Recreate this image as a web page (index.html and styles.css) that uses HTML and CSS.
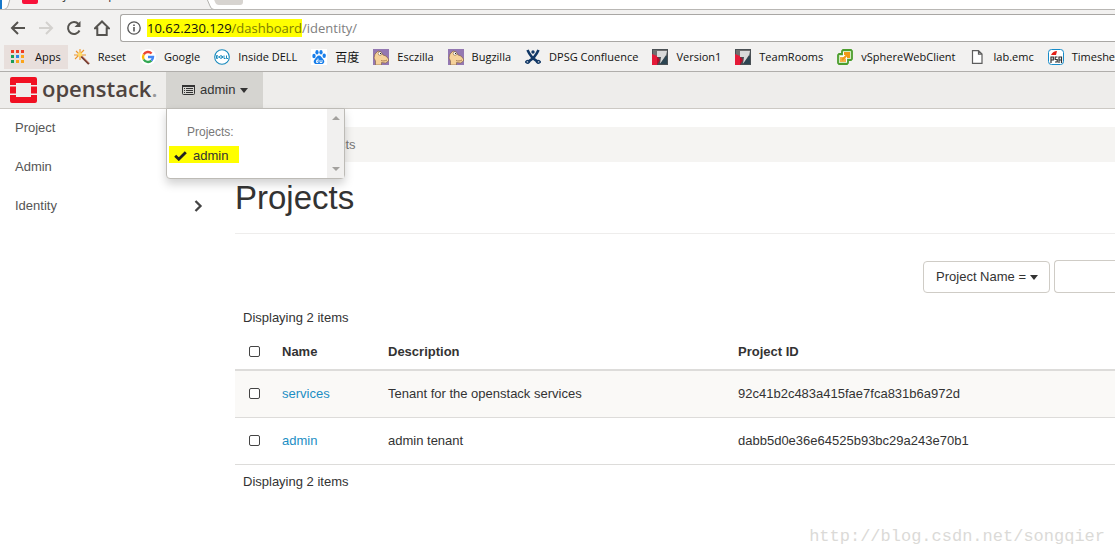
FILE: index.html
```html
<!DOCTYPE html>
<html lang="en">
<head>
<meta charset="utf-8">
<title>Projects - OpenStack Dashboard</title>
<link rel="stylesheet" href="styles.css">
</head>
<body>
<svg class="defs" aria-hidden="true">
  <symbol id="buggie" viewBox="0 0 16 16"><path fill="#9478b2" d="M0 0h16v16H0z"/><path fill="#f6d29a" stroke="#7d5a40" stroke-width=".6" d="M2.500 16v-4L1 9l1-4 3-3 3 1 2 3 3 1 2.500 3v2l-3 2-4-.5V16z"/><circle cx="7" cy="4.500" r="1.800" fill="#fff" stroke="#6d4c35" stroke-width=".5"/><path fill="#222" d="M7 4h1v1H7z"/><path stroke="#9b6c45" fill="none" stroke-width=".8" d="M8 11.500c2 .8 4 .5 6-.5"/></symbol>
  <symbol id="vone" viewBox="0 0 16 16"><path fill="#4a5054" d="M0 0h16v16H0z"/><path fill="#6f6f6f" d="M1 1h14v6H1z"/><path fill="#e51a38" d="M0 5l5 2v9H0z"/><path fill="#b50f2b" d="M5 7l3 4-3 5z"/><path fill="#d9d9d9" d="M5 2h10l-1 4-6 9 1-7H5z"/><path fill="#2c4552" d="M15 6v9H8z"/></symbol>
</svg>

<div class="tabstrip">
  <svg class="tab-shape" width="260" height="10" viewBox="0 0 260 10" aria-hidden="true"><path fill="#fff" d="M0 0h260v10H0z"/><path fill="#1979ca" d="M0 0h2v9H0z"/><path fill="#f2f1f0" stroke="#b3b1ae" d="M4 9.500Q7 9 8 6L10-1H207l3 7q1 3.500 4 3.500"/><path fill="#d7d4d0" d="M213-3h30v5q0 3-3 3h-21q-3 0-4-3z"/><rect x="22" y="-12" width="16" height="16" rx="2" fill="#f8123a"/></svg>
  <span class="tab-title">Projects - OpenStack</span>
</div>

<div class="toolbar">
  <button class="tool" aria-label="Back"><svg width="16" height="16" viewBox="0 0 16 16"><path d="M15 8H2M8 2L2 8l6 6"/></svg></button>
  <button class="tool tool-off" aria-label="Forward" disabled><svg width="16" height="16" viewBox="0 0 16 16"><path d="M1 8h13M8 2l6 6-6 6"/></svg></button>
  <button class="tool" aria-label="Reload"><svg width="16" height="16" viewBox="0 0 16 16"><path d="M13.500 10.500A6 6 0 1 1 12.500 4"/><path class="solid" d="M14.500 1v6h-6z"/></svg></button>
  <button class="tool" aria-label="Home"><svg width="16" height="16" viewBox="0 0 16 16"><path d="M1 8.300L8 1.500l7 6.800h-2.300V15H3.300V8.300z"/></svg></button>
  <div class="omnibox">
    <svg width="14" height="14" viewBox="0 0 14 14" aria-hidden="true"><circle cx="7" cy="7" r="6.200" fill="none" stroke="#555" stroke-width="1.300"/><path fill="#555" d="M6.200 6h1.600v4.500H6.200zM6.200 3.400h1.600V5H6.200z"/></svg>
    <span class="url"><mark><b>10.62.230.129</b>/dashboard</mark>/identity/</span>
  </div>
</div>

<nav class="bookmarks">
  <a class="bm bm-on" href="#"><svg viewBox="0 0 16 16"><path fill="#ef3b24" d="M0 1h3v3H0zM5 1h3v3H5zM10 1h3v3h-3z"/><path fill="#1a9e57" d="M0 6h3v3H0zM0 11h3v3H0z"/><path fill="#2a87e6" d="M5 6h3v3H5z"/><path fill="#fba41a" d="M10 6h3v3h-3zM5 11h3v3H5zM10 11h3v3h-3z"/></svg>Apps</a>
  <a class="bm" href="#"><svg viewBox="0 0 16 16"><path stroke="#ed982b" stroke-width="1.100" d="M6 0v11M0 6h12M2 2l8 8M10 1L1 10"/><circle cx="6" cy="5.500" r="2.200" fill="#ffdc68"/><path stroke="#743d32" stroke-width="2.200" d="M7.500 7.500l7.500 7.500"/><path stroke="#d58b78" stroke-width=".8" d="M8 7l7 7"/></svg>Reset</a>
  <a class="bm" href="#"><svg viewBox="0 0 16 16"><circle cx="8" cy="8" r="8" fill="#fff"/><g fill="none" stroke-width="2.400"><path stroke="#ea4335" d="M3.700 5.500A5 5 0 0 1 11.600 4.500"/><path stroke="#fbbc05" d="M3.700 10.500a5 5 0 0 1 0-5"/><path stroke="#34a853" d="M3.700 10.500a5 5 0 0 0 7.700 1.100"/><path stroke="#4285f4" d="M8 8h5a5 5 0 0 1-1.600 3.600"/></g></svg>Google</a>
  <a class="bm" href="#"><svg viewBox="0 0 16 16"><circle cx="8" cy="8" r="7.300" fill="#fff" stroke="#1689bd" stroke-width="1.100"/><path fill="none" stroke="#1689bd" stroke-width="1" d="M2.500 6.500v3h1q1.500-1.500 0-3zM5 8l2-1.500L9 8 7 9.500zM7 8h2M10 6.500v3h1.500M12.500 6.500v3H14"/></svg>Inside DELL</a>
  <a class="bm" href="#"><svg viewBox="0 0 16 16"><path fill="#fff" d="M0 0h16v16H0z"/><g fill="#187eea"><ellipse cx="3" cy="7" rx="1.700" ry="2.200"/><ellipse cx="6" cy="3.300" rx="1.600" ry="2.300"/><ellipse cx="10" cy="3.300" rx="1.600" ry="2.300"/><ellipse cx="13.200" cy="6.700" rx="1.700" ry="2.200"/><path d="M8 6.500c2 0 2.500 2 4 3.400 2.500 2.300 1 5.100-1.500 5.100h-5C3 15 1.500 12.200 4 9.900 5.500 8.500 6 6.500 8 6.500z"/></g><path fill="none" stroke="#fff" stroke-width=".9" d="M7 9.500v4H5.500v-2.200H7M9 11v2.500h2V11"/></svg><span class="cjk">百度</span></a>
  <a class="bm" href="#"><svg><use href="#buggie"/></svg>Esczilla</a>
  <a class="bm" href="#"><svg><use href="#buggie"/></svg>Bugzilla</a>
  <a class="bm" href="#"><svg viewBox="0 0 16 16"><g fill="none" stroke="#123866" stroke-width="2.600"><path d="M2.500 1Q6 9 12.500 12.500M13.500 1Q10 9 3.500 12.500"/><path stroke-width="1.400" d="M.5 13q2-3 4 0-2 2.500-4 0zM11.500 13q2-3 4 0-2 2.500-4 0z"/></g><circle cx="8" cy="3" r="1.700" fill="#123866"/></svg>DPSG Confluence</a>
  <a class="bm" href="#"><svg><use href="#vone"/></svg>Version1</a>
  <a class="bm" href="#"><svg><use href="#vone"/></svg>TeamRooms</a>
  <a class="bm" href="#"><svg viewBox="0 0 16 16"><path fill="#d3ecc0" stroke="#4c9e2e" stroke-width="1.800" d="M6 1h8l1 1v8l-1 1h-3v3l-1 1H2l-1-1V6l1-1h3V2z"/><path fill="#fff" d="M6 3h7v6h-3v4H3V7h3z"/><path fill="#f09a17" d="M7 3h6v6h-3V6H7z"/><path fill="#f5b04a" d="M3 8h4l2 2v3H3z"/><path stroke="#f09a17" stroke-width="2" d="M5 11l6-6"/></svg>vSphereWebClient</a>
  <a class="bm" href="#"><svg viewBox="0 0 16 16"><path fill="#fff" stroke="#5d5d5d" stroke-width="1.200" d="M2.500 1.600h6l3.500 3.500v9.300H2.500zM8.500 1.600v3.500H12"/></svg>lab.emc</a>
  <a class="bm" href="#"><svg viewBox="0 0 16 16"><rect x=".5" y=".5" width="15" height="15" rx="3" fill="#fff" stroke="#168bc9"/><path fill="#e22018" d="M3 6q2-4 6-4L8 6z"/><path fill="none" stroke="#333" stroke-width="1.200" d="M3 14V8h2.300v3H3M9.500 8H7.200v2.500h2V13H7M11 14V8h2.500v6M11 11h2.500"/></svg>Timeshee</a>
</nav>

<header class="topbar">
  <a class="brand" href="#"><svg width="27" height="26" viewBox="0 0 27 26" aria-hidden="true"><path fill="#f11022" d="M2 0h23q2 0 2 2v6h-6V6H6v2H0V2q0-2 2-2zM0 9.500h6v7H0zM21 9.500h6v7h-6zM0 18h6v2h15v-2h6v6q0 2-2 2H2q-2 0-2-2z"/></svg><span>openstack<small>.</small></span></a>
  <div class="switcher">
    <button class="switch-btn" aria-expanded="true"><svg width="13" height="10" viewBox="0 0 13 10" aria-hidden="true"><rect x=".5" y=".5" width="12" height="9" rx="1" fill="none" stroke="#333"/><path fill="#333" d="M0 0h13v2H0zM2 3h1v1H2zM4 3h7v1H4zM2 5h1v1H2zM4 5h7v1H4zM2 7h1v1H2zM4 7h7v1H4z"/></svg>admin<i class="caret"></i></button>
    <div class="menu">
      <div class="menu-list">
        <div class="menu-head">Projects:</div>
        <a class="menu-item" href="#"><svg width="13" height="10" viewBox="0 0 13 10" aria-hidden="true"><path fill="none" stroke="#222" stroke-width="2.800" d="M1.200 4.700L4.800 8.200 11.800 1.200"/></svg>admin</a>
      </div>
      <div class="menu-scroll"><i class="up"></i><i class="down"></i></div>
    </div>
  </div>
</header>

<div class="layout">
  <nav class="sidebar">
    <a href="#">Project</a>
    <a href="#">Admin</a>
    <a href="#">Identity<svg width="9" height="12" viewBox="0 0 9 12" aria-hidden="true"><path fill="none" stroke="#444" stroke-width="2.300" d="M1.500 1l5 5-5 5"/></svg></a>
  </nav>
  <main class="main">
    <div class="crumbs"><span>Identity</span><span>/</span><span>Projects</span></div>
    <h1>Projects</h1>
    <div class="filter">
      <button class="filter-btn">Project Name =<i class="caret"></i></button>
      <input class="filter-input" type="text" aria-label="Filter">
    </div>
    <div class="count">Displaying 2 items</div>
    <table class="grid">
      <colgroup><col class="c-check"><col class="c-name"><col class="c-desc"><col></colgroup>
      <thead><tr><th><input type="checkbox" aria-label="Select all"></th><th>Name</th><th>Description</th><th>Project ID</th></tr></thead>
      <tbody>
        <tr><td><input type="checkbox" aria-label="Select services"></td><td><a href="#">services</a></td><td>Tenant for the openstack services</td><td>92c41b2c483a415fae7fca831b6a972d</td></tr>
        <tr><td><input type="checkbox" aria-label="Select admin"></td><td><a href="#">admin</a></td><td>admin tenant</td><td>dabb5d0e36e64525b93bc29a243e70b1</td></tr>
      </tbody>
    </table>
    <div class="count">Displaying 2 items</div>
  </main>
</div>
<div class="watermark">http://blog.csdn.net/songqier</div>
</body>
</html>
```

FILE: styles.css
```css
* { box-sizing: border-box; }
body {
  margin: 0;
  min-height: 100vh;
  overflow: hidden;
  display: flex;
  flex-direction: column;
  background: #fff;
  color: #333;
  font: 13px/18px "Liberation Sans", Arial, sans-serif;
}
a { color: inherit; text-decoration: none; }
button { font: inherit; color: inherit; margin: 0; }
.defs { display: none; }

/* Browser frame */
.tabstrip {
  position: relative;
  height: 10px;
  overflow: hidden;
  border-bottom: 1px solid #b9b7b4;
}
.tab-shape { display: block; }
.tab-title {
  position: absolute;
  left: 44px;
  top: -14px;
  font: 12px/18px "Open Sans", sans-serif;
}
.toolbar {
  display: flex;
  align-items: center;
  height: 32px;
  padding-top: 4px;
  padding-left: 10px;
  background: #f2f1f0;
}
.tool {
  width: 28px;
  height: 28px;
  padding: 0;
  border: 0;
  background: none;
  display: flex;
  align-items: center;
}
.tool path { fill: none; stroke: #55534f; stroke-width: 2; }
.tool .solid { fill: #55534f; stroke: none; }
.tool-off path { stroke: #d3d1ce; }
.omnibox {
  flex: 1;
  display: flex;
  align-items: center;
  gap: 6px;
  height: 28px;
  margin-left: -2px;
  padding-left: 6px;
  background: #fff;
  border: 1px solid #a9a7a4;
  border-right: 0;
  border-radius: 3px 0 0 3px;
}
.url { font: 13px/16px "Open Sans", sans-serif; color: #808080; }
.url mark { background: #ff0; color: #7d7d00; }
.url b { font-weight: 400; color: #111; }
.bookmarks {
  display: flex;
  align-items: center;
  height: 30px;
  padding-left: 4px;
  background: #f2f1f0;
  border-bottom: 1px solid #b0aeab;
}
.bm {
  flex: none;
  display: flex;
  align-items: center;
  gap: 8px;
  height: 24px;
  padding: 0 7px;
  white-space: nowrap;
  color: #111;
  font: 11px/16px "Open Sans", sans-serif;
}
.bm svg { width: 16px; height: 16px; fill: none; }
.bm-on { margin-right: -1px; background: #e8dfdc; }
.cjk { font: 12px/16px "Noto Sans CJK SC", sans-serif; }

/* Dashboard header */
.topbar {
  display: flex;
  height: 37px;
  background: #eeedeb;
  border-bottom: 1px solid #ccc9c4;
}
.brand {
  display: flex;
  align-items: center;
  gap: 5px;
  width: 166px;
  padding-left: 10px;
  color: #4f4440;
  font: 600 22px/30px "Open Sans", sans-serif;
}
.brand span { padding-bottom: 4px; }
.brand small { font-size: inherit; color: #999; }
.switcher { position: relative; }
.switch-btn {
  display: flex;
  align-items: center;
  gap: 5px;
  height: 36px;
  padding: 0 15px 0 16px;
  border: 0;
  background: #d5d4d0;
}
.caret {
  border: 4px solid transparent;
  border-top: 5px solid currentColor;
  border-bottom: 0;
}
.menu {
  position: absolute;
  top: 36px;
  left: 0;
  z-index: 2;
  display: flex;
  width: 179px;
  height: 71px;
  background: #fff;
  border: 1px solid #bdbbb6;
  border-radius: 0 0 4px 4px;
  box-shadow: 0 5px 10px rgba(0, 0, 0, .18);
}
.menu-list { flex: 1; padding: 14px 2px 0; }
.menu-head { padding-left: 18px; font-size: 12px; color: #777; }
.menu-item {
  display: flex;
  align-items: center;
  gap: 6px;
  width: 70px;
  height: 17px;
  margin-top: 5px;
  padding-top: 2px;
  padding-left: 5px;
  background: #ff0;
  color: #333;
}
.menu-scroll {
  width: 17px;
  padding: 7px 0;
  display: flex;
  flex-direction: column;
  justify-content: space-between;
  align-items: center;
  background: #f1f0ef;
}
.up, .down { border: 4px solid transparent; }
.up { border-top: 0; border-bottom-color: #a3a19e; }
.down { border-bottom: 0; border-top-color: #a3a19e; }

/* Dashboard body */
.layout { flex: 1; display: flex; }
.sidebar { width: 220px; color: #555; }
.sidebar a {
  display: flex;
  align-items: center;
  justify-content: space-between;
  height: 39px;
  padding: 0 17px 2px 15px;
}
.main { flex: 1; min-width: 0; padding: 18px 0 0 15px; }
.crumbs {
  display: flex;
  gap: 6px;
  padding: 9px 16px 8px;
  background: #f5f4f2;
  color: #777;
}
h1 {
  margin: 0;
  padding: 16px 0 16px;
  border-bottom: 1px solid #eeedec;
  font-size: 33px;
  font-weight: 400;
  line-height: 39px;
}
.filter {
  display: flex;
  justify-content: flex-end;
  align-items: flex-end;
  gap: 4px;
  margin-top: 26px;
}
.filter-btn {
  display: flex;
  align-items: center;
  gap: 4px;
  height: 32px;
  padding: 0 11px 0 12px;
  background: #fff;
  border: 1px solid #cfccc6;
  border-radius: 4px;
}
.filter-input {
  width: 61px;
  height: 33px;
  background: #fff;
  border: 1px solid #cfccc6;
  border-right: 0;
  border-radius: 4px 0 0 4px;
}
.count { padding: 8px; }
.filter + .count { padding: 16px 8px 7px; }
.grid { width: 100%; table-layout: fixed; border-collapse: collapse; }
.c-check { width: 39px; }
.c-name { width: 106px; }
.c-desc { width: 350px; }
.grid th, .grid td { padding: 0 8px; text-align: left; vertical-align: middle; }
.grid th { height: 36px; border-bottom: 2px solid #dddcda; }
.grid td { height: 47px; border-bottom: 1px solid #dddcda; }
.grid tbody tr:first-child { background: #faf9f7; }
.grid a { color: #1c8ec4; }
.grid input {
  appearance: none;
  display: block;
  width: 11px;
  height: 11px;
  margin: 0 auto;
  background: #fff;
  border: 1px solid #444;
  border-radius: 2px;
}
.watermark {
  padding: 0 10px 8px;
  text-align: right;
  color: #dbdad7;
  font: 17px/24px "Liberation Mono", "Courier New", monospace;
}
```
